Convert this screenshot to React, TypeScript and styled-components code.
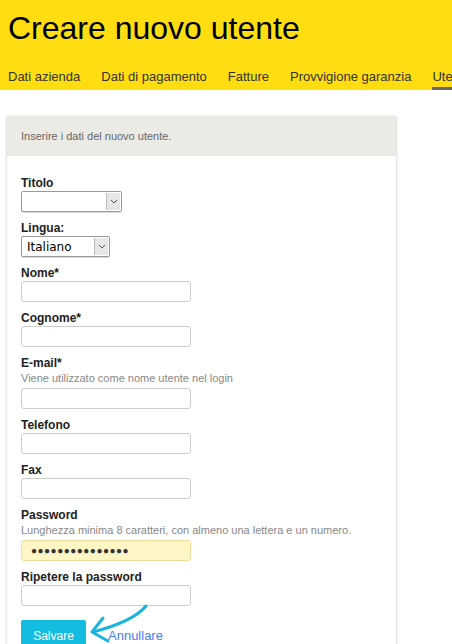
import React from "react";
import styled, { createGlobalStyle } from "styled-components";

const Global = createGlobalStyle`
  body { margin: 0; font-family: Arial, "Liberation Sans", sans-serif; background: #fff; }
`;

const Header = styled.div`
  background: #ffdd11;
  height: 90px;
  padding: 0 8px 0 8px;
  box-sizing: border-box;
  display: flex;
  flex-direction: column;
`;

const Title = styled.h1`
  margin: 9px 0 0;
  font-size: 32px;
  font-weight: normal;
  color: #000;
  line-height: 38px;
`;

const Tabs = styled.div`
  display: flex;
  gap: 21px;
  margin-top: auto;
  white-space: nowrap;
`;

const Tab = styled.div<{ $active?: boolean }>`
  font-size: 13px;
  color: #333;
  padding-bottom: 3px;
  border-bottom: 3px solid ${(p) => (p.$active ? "#666" : "transparent")};
`;

const Card = styled.div`
  margin: 26px 0 0 7px;
  width: 389px;
  box-shadow: 0 1px 3px rgba(0, 0, 0, 0.25);
  background: #fff;
`;

const CardHead = styled.div`
  background: #ebebe6;
  height: 39px;
  padding: 0 14px;
  display: flex;
  align-items: center;
  font-size: 11px;
  color: #666;
  border-bottom: 1px solid #e4e4e0;
`;

const Body = styled.div`
  padding: 19px 14px 14px;
  display: flex;
  flex-direction: column;
`;

const Field = styled.div`
  display: flex;
  flex-direction: column;
  margin-bottom: 8px;
`;

const Label = styled.label`
  font-size: 12px;
  font-weight: bold;
  color: #222;
  line-height: 16px;
`;

const Hint = styled.div`
  font-size: 11px;
  color: #888;
  line-height: 14px;
  margin-bottom: 3px;
`;

const Select = styled.div<{ $w: number }>`
  width: ${(p) => p.$w}px;
  height: 21px;
  box-sizing: border-box;
  border: 1px solid #999;
  border-radius: 2px;
  display: flex;
  align-items: center;
  font-family: Tahoma, "DejaVu Sans", sans-serif;
  font-size: 12px;
  color: #000;
  box-shadow: 0 1px 1px rgba(0,0,0,0.15);
`;

const SelText = styled.span`
  flex: 1;
  padding-left: 5px;
`;

const Arrow = styled.span`
  width: 13px;
  height: 17px;
  margin-right: 1px;
  background: #e6e6e6;
  border-left: 1px solid #bbb;
  display: flex;
  align-items: center;
  justify-content: center;
`;

const Input = styled.div<{ $filled?: boolean }>`
  width: 170px;
  height: 21px;
  box-sizing: border-box;
  border: 1px solid ${(p) => (p.$filled ? "#f0dc9a" : "#ccc")};
  background: ${(p) => (p.$filled ? "#fff6c6" : "#fff")};
  border-radius: 3px;
  display: flex;
  align-items: center;
  padding-left: 9px;
  font-size: 10px;
  letter-spacing: 0.5px;
  color: #333;
`;

const Actions = styled.div`
  position: relative;
  display: flex;
  align-items: center;
  gap: 22px;
  margin-top: 6px;
`;

const Button = styled.div`
  background: #12bde0;
  color: #fff;
  font-size: 12px;
  width: 65px;
  height: 31px;
  border-radius: 2px;
  display: flex;
  align-items: center;
  justify-content: center;
`;

const Link = styled.a`
  color: #4a7df0;
  font-size: 13px;
  margin-top: 0;
`;

const ArrowDraw = styled.svg`
  position: absolute;
  left: 60px;
  top: -20px;
`;

const Caret = () => (
  <svg width="8" height="5" viewBox="0 0 8 5">
    <path d="M1 1l3 3 3-3" stroke="#555" fill="none" strokeWidth="1" />
  </svg>
);

const TextField = ({ label, hint, filled }: { label: string; hint?: string; filled?: boolean }) => (
  <Field>
    <Label>{label}</Label>
    {hint && <Hint>{hint}</Hint>}
    <Input $filled={filled}>{filled ? "●●●●●●●●●●●●●●●" : ""}</Input>
  </Field>
);

export default function App() {
  return (
    <>
      <Global />
      <Header>
        <Title>Creare nuovo utente</Title>
        <Tabs>
          <Tab>Dati azienda</Tab>
          <Tab>Dati di pagamento</Tab>
          <Tab>Fatture</Tab>
          <Tab>Provvigione garanzia</Tab>
          <Tab $active>Utente</Tab>
        </Tabs>
      </Header>
      <Card>
        <CardHead>Inserire i dati del nuovo utente.</CardHead>
        <Body>
          <Field>
            <Label>Titolo</Label>
            <Select $w={101}><SelText /><Arrow><Caret /></Arrow></Select>
          </Field>
          <Field>
            <Label>Lingua:</Label>
            <Select $w={89}><SelText>Italiano</SelText><Arrow><Caret /></Arrow></Select>
          </Field>
          <TextField label="Nome*" />
          <TextField label="Cognome*" />
          <TextField label="E-mail*" hint="Viene utilizzato come nome utente nel login" />
          <TextField label="Telefono" />
          <TextField label="Fax" />
          <TextField
            label="Password"
            hint="Lunghezza minima 8 caratteri, con almeno una lettera e un numero."
            filled
          />
          <TextField label="Ripetere la password" />
          <Actions>
            <Button>Salvare</Button>
            <Link>Annullare</Link>
            <ArrowDraw width="80" height="50" viewBox="0 0 80 50">
              <path d="M65 6 C55 18 35 26 12 32" stroke="#17b4de" strokeWidth="3" fill="none" strokeLinecap="round" />
              <path d="M22 18 L11 32 L27 41" stroke="#17b4de" strokeWidth="3" fill="none" strokeLinecap="round" strokeLinejoin="round" />
            </ArrowDraw>
          </Actions>
        </Body>
      </Card>
    </>
  );
}
